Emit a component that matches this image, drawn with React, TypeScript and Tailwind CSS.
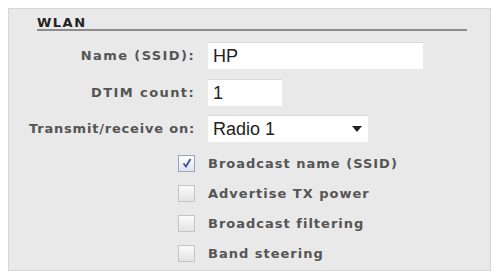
import React from "react";

const labelCls =
  "text-[13px] font-bold text-[#555] leading-none whitespace-nowrap";

function Box({ checked }: { checked?: boolean }) {
  return (
    <div
      className={
        "w-[17px] h-[17px] border flex items-center justify-center " +
        (checked
          ? "border-[#9aa3c4] bg-gradient-to-b from-[#ffffff] to-[#dfe3ef]"
          : "border-[#c4c4c4] bg-gradient-to-b from-[#fafafa] to-[#e4e4e4]")
      }
    >
      {checked && (
        <svg width="12" height="12" viewBox="0 0 12 12">
          <path d="M2.5 6.5 L5 9.5 L9.5 2" fill="none" stroke="#3b4fa0" strokeWidth="1.8" />
        </svg>
      )}
    </div>
  );
}

export default function App() {
  return (
    <div className="w-[498px] h-[274px] bg-white pt-[8px] pl-[8px]" style={{ fontFamily: '"DejaVu Sans", sans-serif' }}>
      <div className="w-[483px] h-[263px] bg-[#e9e9e9] border border-[#d6d6d6] pl-[28px] pr-[23px] pt-[7px]">
        <div className="h-[13px] flex items-end">
          <span className="text-[13px] font-bold text-[#222] tracking-[1.5px] leading-none">WLAN</span>
        </div>
        <div className="h-[2px] bg-[#8c8c8c]" />
        <div className="grid grid-cols-[158px_1fr] gap-x-[13px] mt-[11px] items-center">
          <div className={labelCls + " tracking-[1.4px] flex justify-end"}><span>Name (SSID):</span></div>
          <div className="w-[215px] h-[27px] bg-white border-t border-[#dadada] flex items-center pl-[5px] text-[18px] text-[#222]" style={{ fontFamily: '"Liberation Sans", sans-serif' }}>HP</div>
          <div className={labelCls + " tracking-[1.4px] flex justify-end mt-[10px]"}><span>DTIM count:</span></div>
          <div className="w-[74px] h-[27px] bg-white border-t border-[#dadada] flex items-center pl-[5px] text-[18px] text-[#222] mt-[10px]" style={{ fontFamily: '"Liberation Sans", sans-serif' }}>1</div>
          <div className={labelCls + " tracking-[0.8px] flex justify-end mt-[9px]"}><span className="shrink-0">Transmit/receive on:</span></div>
          <div className="w-[160px] h-[27px] bg-white border-t border-[#dadada] flex items-center justify-between pl-[5px] pr-[6px] text-[18px] text-[#222] mt-[9px]" style={{ fontFamily: '"Liberation Sans", sans-serif' }}>
            <span>Radio 1</span>
            <svg width="10" height="6" viewBox="0 0 10 6"><path d="M0 0 L10 0 L5 6 Z" fill="#222" /></svg>
          </div>
        </div>
        <div className="flex flex-col pl-[141px] mt-[6px]">
          {[
            ["Broadcast name (SSID)", true],
            ["Advertise TX power", false],
            ["Broadcast filtering", false],
            ["Band steering", false],
          ].map(([t, c]) => (
            <div key={t as string} className="h-[30px] flex items-center gap-[13px]">
              <Box checked={c as boolean} />
              <span className={labelCls + " tracking-[1px]"}>{t as string}</span>
            </div>
          ))}
        </div>
      </div>
    </div>
  );
}
